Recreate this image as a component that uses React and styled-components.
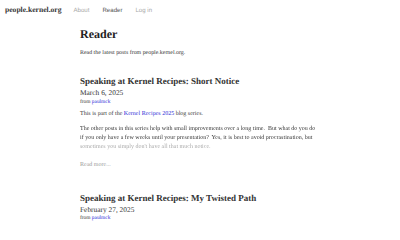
import styled, { createGlobalStyle } from "styled-components";

const GlobalStyle = createGlobalStyle`
  html, body {
    margin: 0;
    padding: 0;
    background: #fff;
  }
  body {
    font-family: "Liberation Serif", "Times New Roman", serif;
    color: #333;
    text-rendering: geometricPrecision;
  }
`;

const posts = [
  {
    id: 1,
    title: "Speaking at Kernel Recipes: Short Notice",
    date: "March 6, 2025",
    author: "paulmck",
    excerpt: true,
  },
  {
    id: 2,
    title: "Speaking at Kernel Recipes: My Twisted Path",
    date: "February 27, 2025",
    author: "paulmck",
  },
];

const App = () => {
  return (
    <>
      <GlobalStyle />
      <Nav>
        <SiteName>people.kernel.org</SiteName>
        <NavLink>About</NavLink>
        <NavLink $active>Reader</NavLink>
        <NavLink>Log in</NavLink>
      </Nav>
      <Main>
        <PageTitle>Reader</PageTitle>
        <Intro>Read the latest posts from people.kernel.org.</Intro>
        {posts.map((post) => (
          <Post key={post.id}>
            <PostTitle>{post.title}</PostTitle>
            <PostDate>{post.date}</PostDate>
            <Byline>
              from <Link>{post.author}</Link>
            </Byline>
            {post.excerpt && (
              <>
                <Para>
                  This is part of the <Link>Kernel Recipes 2025</Link> blog
                  series.
                </Para>
                <Fade>
                  The other posts in this series help with small improvements
                  over a long time.&nbsp; But what do you do if you only have a
                  few weeks until your presentation?&nbsp; Yes, it is best to
                  avoid procrastination, but sometimes you simply don't have
                  all that much notice.
                </Fade>
                <ReadMore>Read more...</ReadMore>
              </>
            )}
          </Post>
        ))}
      </Main>
    </>
  );
};

const Nav = styled.nav`
  display: flex;
  align-items: baseline;
  padding: 3px 5px 0;
  font-size: 7.6px;
  line-height: 13px;
`;

const SiteName = styled.span`
  font-family: "Liberation Serif", serif;
  font-weight: bold;
  font-size: 7.6px;
  color: #333;
  margin-right: 12px;
`;

const NavLink = styled.span`
  font-family: "Liberation Sans", Arial, sans-serif;
  font-size: 6.1px;
  color: ${(p) => (p.$active ? "#555" : "#aaa")};
  margin-right: 13px;
`;

const Main = styled.main`
  width: 240px;
  margin-left: 80px;
  padding-top: 10px;
`;

const PageTitle = styled.h1`
  font-size: 12px;
  line-height: 14px;
  font-weight: bold;
  color: #222;
  margin: 0 0 8px;
`;

const Intro = styled.p`
  font-size: 5.9px;
  line-height: 8px;
  color: #333;
  margin: 0 0 19px;
`;

const Post = styled.article`
  margin-bottom: 23px;
`;

const PostTitle = styled.h2`
  font-size: 9px;
  line-height: 11px;
  font-weight: bold;
  color: #333;
  margin: 0 0 1.4px;
`;

const PostDate = styled.div`
  font-size: 7.4px;
  line-height: 9px;
  color: #333;
  margin-bottom: 1.4px;
`;

const Byline = styled.div`
  font-size: 5.4px;
  line-height: 7px;
  color: #333;
  margin-bottom: 4.4px;
`;

const Link = styled.a`
  color: #2a2ad6;
  text-decoration: none;
`;

const Para = styled.p`
  font-size: 6px;
  line-height: 9px;
  color: #333;
  margin: 0 0 5.5px;
`;

const Fade = styled(Para)`
  -webkit-mask-image: linear-gradient(to bottom, #000 64%, rgba(0, 0, 0, 0.45) 70%);
  mask-image: linear-gradient(to bottom, #000 64%, rgba(0, 0, 0, 0.45) 70%);
  margin-bottom: 9px;
`;

const ReadMore = styled.div`
  font-size: 6px;
  line-height: 9px;
  color: #999;
`;

export default App;
